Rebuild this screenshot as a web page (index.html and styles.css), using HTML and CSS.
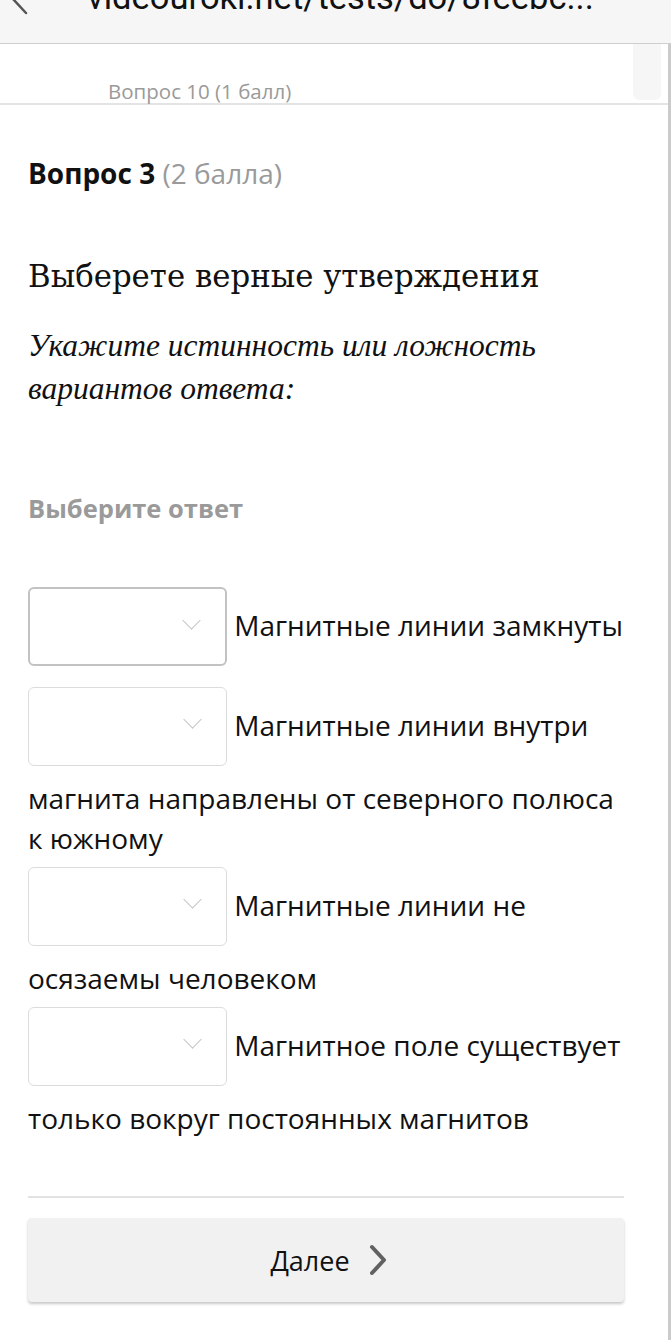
FILE: index.html
```html
<!DOCTYPE html>
<html lang="ru">

<head>
  <meta charset="UTF-8">
  <meta name="viewport" content="width=device-width, initial-scale=1.0">
  <title>Тест</title>
  <link rel="stylesheet" href="styles.css">
</head>

<body>
  <div class="urlbar">
    <svg class="back" width="20" height="16" viewBox="0 0 20 16">
      <path d="M17 13 L4 -1" fill="none" stroke="#555" stroke-width="2.5" stroke-linecap="round" />
    </svg>
    <div class="url">videouroki.net/tests/do/8feebc...</div>
  </div>

  <div class="page">
    <div class="prev-strip">
      <span class="prev-title">Вопрос 10 (1 балл)</span>
      <div class="strip-thumb"></div>
    </div>

    <div class="quiz">
      <h2 class="q-head">Вопрос 3 <span class="q-points">(2 балла)</span></h2>
      <div class="q-title">Выберете верные утверждения</div>
      <div class="q-hint">Укажите истинность или ложность вариантов ответа:</div>
      <div class="q-label">Выберите ответ</div>

      <div class="answers">
        <div class="answer">
          <span class="pick pick-active"><span class="pick-arrow"></span></span>
          Магнитные линии замкнуты
        </div>
        <div class="answer">
          <span class="pick"><span class="pick-arrow"></span></span>
          Магнитные линии внутри магнита направлены от северного полюса к южному
        </div>
        <div class="answer">
          <span class="pick"><span class="pick-arrow"></span></span>
          Магнитные линии не осязаемы человеком
        </div>
        <div class="answer">
          <span class="pick"><span class="pick-arrow"></span></span>
          Магнитное поле существует только вокруг постоянных магнитов
        </div>
      </div>

      <hr class="divider">

      <button class="next-btn" type="button">
        Далее
        <svg width="20" height="32" viewBox="0 0 20 32">
          <path d="M4 3 L16 16 L4 29" fill="none" stroke="#616161" stroke-width="4" stroke-linecap="round" stroke-linejoin="round" />
        </svg>
      </button>
    </div>
  </div>
</body>

</html>
```

FILE: styles.css
```css
body {
  margin: 0;
  font-family: 'Open Sans', 'Noto Sans', sans-serif;
  color: #111;
  background: #fff;
}

/* browser address bar, scrolled half out of view */
.urlbar {
  height: 43px;
  background: #f6f6f6;
  border-bottom: 1px solid #cfcfcf;
  overflow: hidden;
  position: relative;
}

.urlbar .back {
  position: absolute;
  left: 9px;
  top: 0;
}

.url {
  position: absolute;
  left: 87px;
  top: -25px;
  font-family: Roboto, sans-serif;
  font-size: 34.5px;
  line-height: 44px;
  color: #111;
  white-space: nowrap;
}

.page {
  border-right: 3px solid #cbcbcb;
}

.prev-strip {
  height: 59px;
  border-bottom: 2px solid #e4e4e4;
  display: flex;
  align-items: flex-end;
  padding-left: 108px;
  position: relative;
}

.prev-title {
  font-size: 20.5px;
  line-height: 24px;
  color: #9a9a9a;
}

.strip-thumb {
  position: absolute;
  right: 7px;
  top: 0;
  width: 28px;
  height: 56px;
  background: #f6f6f6;
  border-radius: 0 0 6px 6px;
}

.quiz {
  padding: 50px 44px 38px 28px;
}

.q-head {
  margin: 0;
  font-size: 28px;
  line-height: 36px;
  font-weight: 700;
}

.q-points {
  font-weight: 400;
  color: #9a9a9a;
}

.q-title {
  margin-top: 63px;
  font-family: 'DejaVu Serif', serif;
  font-size: 30.8px;
  line-height: 44px;
}

.q-hint {
  margin-top: 26px;
  font-family: 'Liberation Serif', serif;
  font-style: italic;
  font-size: 31.5px;
  line-height: 43px;
  padding-right: 40px;
}

.q-label {
  margin-top: 82px;
  font-size: 25.5px;
  line-height: 32px;
  font-weight: 700;
  color: #9a9a9a;
}

.answers {
  margin: 54px -3px 0 0;
}

.answer {
  font-size: 28px;
  line-height: 40px;
}

.pick {
  display: inline-block;
  box-sizing: border-box;
  width: 199px;
  height: 79px;
  margin: 9px 0 12px 0;
  vertical-align: middle;
  border: 1.5px solid #dcdcdc;
  border-radius: 6px;
  position: relative;
}

.pick-active {
  border: 2px solid #c2c2c2;
}

.pick-arrow {
  position: absolute;
  right: 27px;
  top: 25px;
  width: 12px;
  height: 12px;
  border-right: 1.5px solid #c6c6c6;
  border-bottom: 1.5px solid #c6c6c6;
  transform: rotate(45deg);
}

.divider {
  margin: 58px 0 20px;
  border: none;
  border-top: 2px solid #e2e2e2;
}

.next-btn {
  display: flex;
  align-items: center;
  justify-content: center;
  gap: 18px;
  width: 100%;
  height: 84px;
  border: none;
  border-radius: 4px;
  background: #f1f1f1;
  box-shadow: 0 2px 3px rgba(0, 0, 0, 0.22);
  font-family: 'Open Sans', sans-serif;
  font-size: 27px;
  color: #111;
  padding: 0 0 0 6px;
}
```
